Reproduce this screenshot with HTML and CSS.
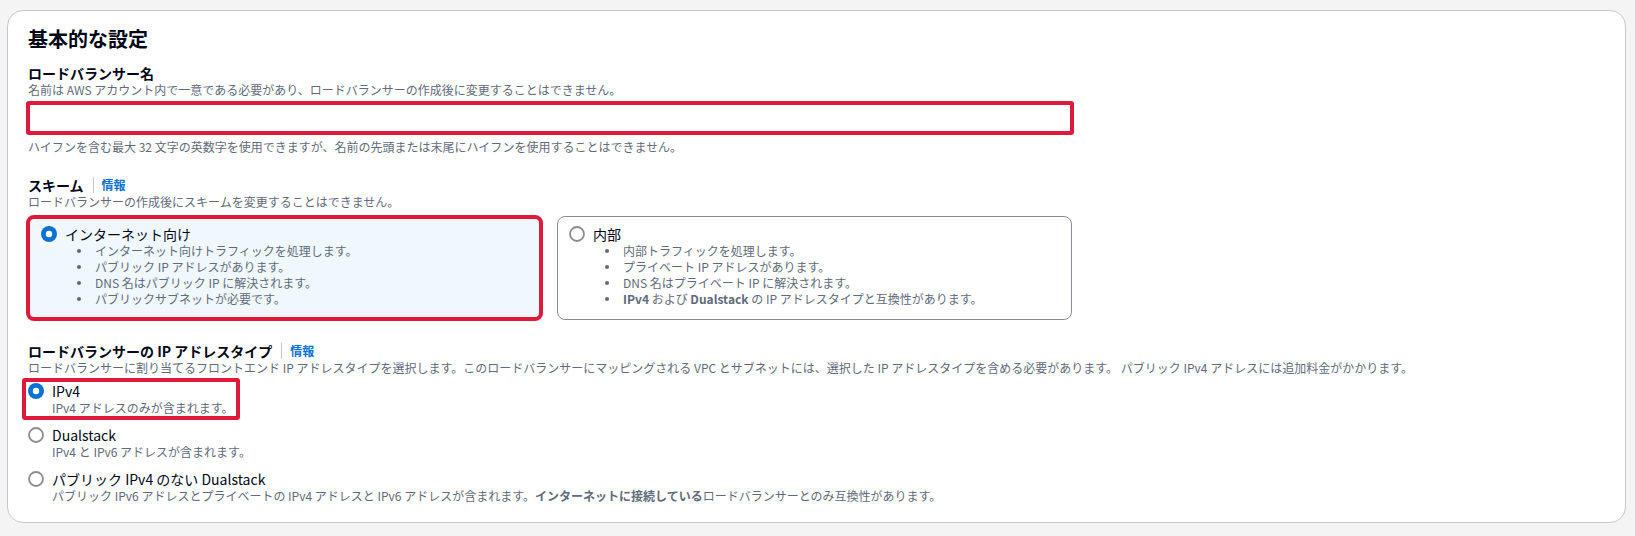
FILE: index.html
```html
<!DOCTYPE html>
<html lang="ja">
<head>
  <meta charset="UTF-8">
  <title>基本的な設定</title>
  <link rel="stylesheet" href="styles.css">
</head>
<body>
  <div class="container">
    <h2 class="container-title">基本的な設定</h2>

    <!-- ロードバランサー名 -->
    <div class="field field-first">
      <div class="field-label">ロードバランサー名</div>
      <div class="field-desc">名前は AWS アカウント内で一意である必要があり、ロードバランサーの作成後に変更することはできません。</div>
      <input type="text" class="text-input marked">
      <div class="field-hint">ハイフンを含む最大 32 文字の英数字を使用できますが、名前の先頭または末尾にハイフンを使用することはできません。</div>
    </div>

    <!-- スキーム -->
    <div class="field">
      <div class="field-label">スキーム<span class="divider"></span><a class="info-link">情報</a></div>
      <div class="field-desc">ロードバランサーの作成後にスキームを変更することはできません。</div>
      <div class="tiles">
        <div class="tile tile-selected marked">
          <div class="tile-head">
            <svg class="radio" width="16" height="16" viewBox="0 0 16 16"><circle cx="8" cy="8" r="8" fill="#0972d3"/><circle cx="8" cy="8" r="3.2" fill="#fff"/></svg>
            <span>インターネット向け</span>
          </div>
          <ul class="tile-list">
            <li>インターネット向けトラフィックを処理します。</li>
            <li>パブリック IP アドレスがあります。</li>
            <li>DNS 名はパブリック IP に解決されます。</li>
            <li>パブリックサブネットが必要です。</li>
          </ul>
        </div>
        <div class="tile tile-plain">
          <div class="tile-head">
            <svg class="radio" width="16" height="16" viewBox="0 0 16 16"><circle cx="8" cy="8" r="7" fill="#fff" stroke="#8c8c94" stroke-width="1.8"/></svg>
            <span>内部</span>
          </div>
          <ul class="tile-list">
            <li>内部トラフィックを処理します。</li>
            <li>プライベート IP アドレスがあります。</li>
            <li>DNS 名はプライベート IP に解決されます。</li>
            <li><b>IPv4</b> および <b>Dualstack</b> の IP アドレスタイプと互換性があります。</li>
          </ul>
        </div>
      </div>
    </div>

    <!-- IP アドレスタイプ -->
    <div class="field">
      <div class="field-label">ロードバランサーの IP アドレスタイプ<span class="divider"></span><a class="info-link">情報</a></div>
      <div class="field-desc">ロードバランサーに割り当てるフロントエンド IP アドレスタイプを選択します。このロードバランサーにマッピングされる VPC とサブネットには、選択した IP アドレスタイプを含める必要があります。 パブリック IPv4 アドレスには追加料金がかかります。</div>
      <div class="radio-group">
        <div class="radio-item marked-item">
          <svg class="radio" width="16" height="16" viewBox="0 0 16 16"><circle cx="8" cy="8" r="8" fill="#0972d3"/><circle cx="8" cy="8" r="3.2" fill="#fff"/></svg>
          <div>
            <div class="radio-label">IPv4</div>
            <div class="radio-desc">IPv4 アドレスのみが含まれます。</div>
          </div>
        </div>
        <div class="radio-item">
          <svg class="radio" width="16" height="16" viewBox="0 0 16 16"><circle cx="8" cy="8" r="7" fill="#fff" stroke="#8c8c94" stroke-width="1.8"/></svg>
          <div>
            <div class="radio-label">Dualstack</div>
            <div class="radio-desc">IPv4 と IPv6 アドレスが含まれます。</div>
          </div>
        </div>
        <div class="radio-item">
          <svg class="radio" width="16" height="16" viewBox="0 0 16 16"><circle cx="8" cy="8" r="7" fill="#fff" stroke="#8c8c94" stroke-width="1.8"/></svg>
          <div>
            <div class="radio-label">パブリック IPv4 のない Dualstack</div>
            <div class="radio-desc">パブリック IPv6 アドレスとプライベートの IPv4 アドレスと IPv6 アドレスが含まれます。<b>インターネットに接続している</b>ロードバランサーとのみ互換性があります。</div>
          </div>
        </div>
      </div>
    </div>
  </div>
</body>
</html>
```

FILE: styles.css
```css
body {
  margin: 0;
  padding: 10px 9px 0 7px;
  background-color: #f4f4f4;
  font-family: "Noto Sans CJK JP", "Noto Sans", sans-serif;
  color: #000716;
}
.container {
  background-color: #fff;
  border: 1px solid #c6c6cd;
  border-radius: 16px;
  padding: 16px 20px 18px 20px;
}
.container-title {
  margin: 0;
  font-size: 20px;
  line-height: 24px;
  font-weight: 700;
}
.field {
  margin-top: 21px;
}
.field-first {
  margin-top: 13px;
}
.field-label {
  display: flex;
  align-items: center;
  font-size: 14px;
  line-height: 18px;
  font-weight: 700;
}
.divider {
  display: inline-block;
  width: 1px;
  height: 16px;
  background-color: #c6c6cd;
  margin: 0 8px 0 9px;
}
.info-link {
  color: #0972d3;
  font-size: 12px;
  font-weight: 700;
}
.field-desc,
.field-hint {
  font-size: 12px;
  line-height: 16px;
  color: #5f6b7a;
}
.field-hint {
  margin-top: 4px;
}
.marked {
  border: 4px solid #e0193a !important;
  border-radius: 3px;
}
.text-input {
  display: block;
  box-sizing: border-box;
  width: 1048px;
  height: 34px;
  margin: 3px 0 0 -2px;
  background-color: #fff;
  outline: none;
}
.tiles {
  display: grid;
  grid-template-columns: 517px 515px;
  column-gap: 14px;
  align-items: start;
  margin: 5px 0 0 -2px;
}
.tile {
  border-radius: 8px;
}
.tile-selected {
  background-color: #f0f8fd;
  padding: 6px 12px 10px 11px;
}
.tile-plain {
  border: 1px solid #8c8c94;
  padding: 8px 12px 12px 11px;
  margin-top: 1px;
}
.tile-head {
  display: flex;
  align-items: center;
  gap: 8px;
  font-size: 14px;
  line-height: 18px;
}
.radio {
  flex: none;
}
.tile-list {
  margin: 0;
  padding-left: 54px;
  list-style: none;
  font-size: 12px;
  line-height: 16px;
  color: #5f6b7a;
}
.tile-list li::before {
  content: "";
  display: inline-block;
  width: 4px;
  height: 4px;
  border-radius: 50%;
  background-color: #5f6b7a;
  vertical-align: 3px;
  margin: 0 14px 0 -18px;
}
.tile-list b {
  font-weight: 700;
}
.radio-group {
  display: flex;
  flex-direction: column;
  gap: 10px;
  margin-top: 6px;
}
.radio-item {
  display: flex;
  align-items: flex-start;
  gap: 8px;
}
.radio-item .radio {
  margin-top: 1px;
}
.marked-item {
  align-self: flex-start;
  border: 4px solid #e0193a;
  border-radius: 3px;
  margin: -4px 0 -4px -6px;
  padding: 0 2px;
}
.radio-label {
  font-size: 14px;
  line-height: 18px;
}
.radio-desc {
  font-size: 12px;
  line-height: 16px;
  color: #5f6b7a;
}
```
